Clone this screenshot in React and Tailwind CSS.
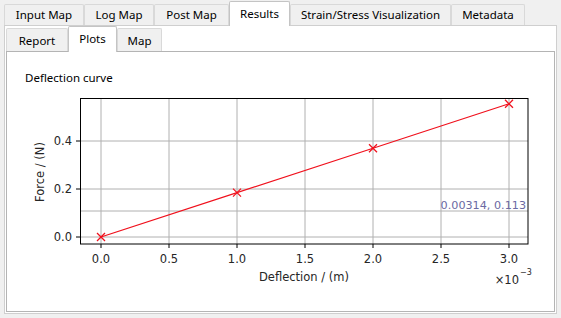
const outerTabs = [
  { label: "Input Map", w: "w-[80px]" },
  { label: "Log Map", w: "w-[70px]" },
  { label: "Post Map", w: "w-[75px]" },
  { label: "Results", w: "w-[61px]", active: true },
  { label: "Strain/Stress Visualization", w: "w-[161px]" },
  { label: "Metadata", w: "w-[74px]" },
];

const innerTabs = [
  { label: "Report", w: "w-[62px]" },
  { label: "Plots", w: "w-[49px]", active: true },
  { label: "Map", w: "w-[45px]" },
];

// plot data: deflection in 1e-3 m, force in N
const points = [
  [0, 0],
  [1, 0.185],
  [2, 0.37],
  [3, 0.555],
];

const px = (v) => 94 + v * 136;
const py = (f) => 149 - f * 240;

const xTicks = [0, 0.5, 1, 1.5, 2, 2.5, 3];
const yTicks = [0, 0.2, 0.4];

function DeflectionPlot() {
  const line = points.map(([v, f]) => `${px(v)},${py(f)}`).join(" ");
  return (
    <svg
      width="546"
      height="222"
      viewBox="0 0 546 222"
      className="block font-['DejaVu_Sans',sans-serif] text-[11.5px]"
    >
      <g fill="#262626">
        {/* grid */}
        {xTicks.map((t) => (
          <line key={"gx" + t} x1={px(t)} y1="10" x2={px(t)} y2="156" stroke="#b0b0b0" strokeWidth="1" />
        ))}
        {yTicks.map((t) => (
          <line key={"gy" + t} x1="73" y1={py(t)} x2="521" y2={py(t)} stroke="#b0b0b0" strokeWidth="1" />
        ))}
        {/* crosshair */}
        <line x1="73" y1="123" x2="521" y2="123" stroke="#b0b0b0" strokeWidth="1" />

        {/* data */}
        <polyline points={line} fill="none" stroke="#f0101c" strokeWidth="1.2" />
        {points.map(([v, f]) => (
          <g key={v} stroke="#f0101c" strokeWidth="1.3">
            <line x1={px(v) - 4} y1={py(f) - 4} x2={px(v) + 4} y2={py(f) + 4} />
            <line x1={px(v) - 4} y1={py(f) + 4} x2={px(v) + 4} y2={py(f) - 4} />
          </g>
        ))}

        {/* axes frame */}
        <rect x="73.5" y="10.5" width="447.5" height="145.5" fill="none" stroke="#000" strokeWidth="1" />

        {/* ticks */}
        {xTicks.map((t) => (
          <g key={"tx" + t}>
            <line x1={px(t)} y1="156" x2={px(t)} y2="160" stroke="#000" strokeWidth="1" />
            <text x={px(t)} y="175" textAnchor="middle">{t.toFixed(1)}</text>
          </g>
        ))}
        {yTicks.map((t) => (
          <g key={"ty" + t}>
            <line x1="69" y1={py(t)} x2="73" y2={py(t)} stroke="#000" strokeWidth="1" />
            <text x="65" y={py(t) + 4} textAnchor="end">{t.toFixed(1)}</text>
          </g>
        ))}

        {/* labels */}
        <text x="297" y="193" textAnchor="middle">Deflection / (m)</text>
        <text transform="translate(37 84) rotate(-90)" textAnchor="middle">Force / (N)</text>
        <text x="512" y="196" textAnchor="end">×10</text>
        <text x="513" y="187" className="text-[8px]">−3</text>

        <text x="519" y="121" textAnchor="end" fill="#6b6aa3" className="text-[11.2px]">
          0.00314, 0.113
        </text>
      </g>
    </svg>
  );
}

function Tab({ label, w, active, inner }) {
  if (active) {
    return (
      <div
        className={`${w} ${inner ? "h-[26px] pb-[2px]" : "h-[25px] pb-[1px]"} -mb-px relative z-10 bg-white border border-b-0 border-[#c4c4c4] rounded-t-[2px] flex items-center justify-center`}
      >
        {label}
      </div>
    );
  }
  return (
    <div
      className={`${w} ${inner ? "h-[23px] pt-[2px]" : "h-[21px]"} bg-[#f0f0f0] border border-b-0 border-[#d9d9d9] rounded-t-[2px] flex items-center justify-center`}
    >
      {label}
    </div>
  );
}

export default function App() {
  return (
    <div className="w-[561px] h-[318px] bg-[#f0f0f0] overflow-hidden text-[11.5px] text-black font-['Noto_Sans','DejaVu_Sans',sans-serif]">
      <div className="flex items-end h-[25px] pl-[4px]">
        {outerTabs.map((t) => (
          <Tab key={t.label} {...t} />
        ))}
      </div>

      <div className="ml-[4px] w-[553px] h-[289px] bg-white border border-[#cfcfcf] px-[1px] pb-[1px] flex flex-col">
        <div className="flex items-end h-[25px]">
          {innerTabs.map((t) => (
            <Tab key={t.label} {...t} inner />
          ))}
        </div>
        <div className="w-[549px] h-[261px] border border-[#b4b4b4] bg-white">
          <div className="h-[36px] pt-[18px] pl-[18px] leading-[16px]">Deflection curve</div>
          <DeflectionPlot />
        </div>
      </div>
    </div>
  );
}
